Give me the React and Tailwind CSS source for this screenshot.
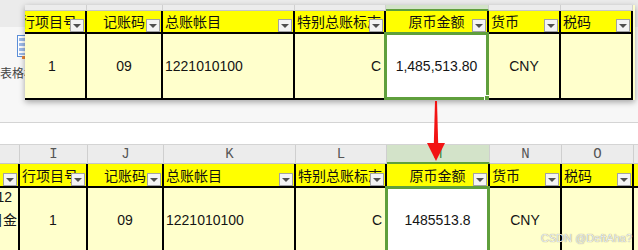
import React from "react";

const COLS = [
  { key: "H", w: "w-[20px]", letter: "", head: "", ha: "left", data: null, da: "left" },
  { key: "I", w: "w-[68px]", letter: "I", head: "行项目号", ha: "left", data: "1", da: "center" },
  { key: "J", w: "w-[76px]", letter: "J", head: "记账码", ha: "center", data: "09", da: "center" },
  { key: "K", w: "w-[132px]", letter: "K", head: "总账帐目", ha: "left", data: "1221010100", da: "left" },
  { key: "L", w: "w-[91px]", letter: "L", head: "特别总账标志", ha: "left", data: "C", da: "right" },
  { key: "M", w: "w-[103px]", letter: "M", head: "原币金额", ha: "center", data: "AMOUNT", da: "center", sel: true },
  { key: "N", w: "w-[72px]", letter: "N", head: "货币", ha: "left", data: "CNY", da: "center" },
  { key: "O", w: "w-[72px]", letter: "O", head: "税码", ha: "left", data: "", da: "left" },
  { key: "P", w: "w-[80px]", letter: "P", head: "", ha: "left", data: "", da: "left" },
];

const HALIGN = {
  left: "justify-start pl-[2px]",
  center: "justify-center",
  right: "justify-end pr-[3px]",
};

function Dropdown({ className = "right-[1px]" }) {
  return (
    <div
      className={`absolute bottom-0 ${className} w-[14px] h-[13px] bg-[#f4f4f4] border border-[#a3a3a3] flex items-center justify-center`}
    >
      <div className="mt-[1px] w-0 h-0 border-l-[4px] border-r-[4px] border-t-[4px] border-l-transparent border-r-transparent border-t-[#505050]" />
    </div>
  );
}

function Sheet({ top, amount }) {
  const cols = top ? COLS.filter((c) => c.key !== "H" && c.key !== "P") : COLS;
  const letterRow = (
    <div className="flex">
      {cols.map((c) => (
        <div
          key={c.key}
          className={`${c.w} shrink-0 h-[19px] border-r border-r-[#cfcfcf] flex items-center justify-center text-[14px] leading-none font-['Liberation_Mono',monospace] ${
            c.sel
              ? "bg-[#d3e3c9] border-b-2 border-b-[#5f9f3c] text-[#2f7d32]"
              : "bg-[#ececec] border-b border-b-[#c6c6c6] text-[#555]"
          }`}
        >
          {c.letter}
        </div>
      ))}
    </div>
  );

  return (
    <div className={top ? "ml-[-6px]" : ""}>
      {top ? (
        <div className="h-[6px] overflow-hidden">
          <div className="-mt-[13px]">{letterRow}</div>
        </div>
      ) : (
        letterRow
      )}

      {/* Yellow header row */}
      <div className="flex">
        {cols.map((c) => (
          <div
            key={c.key}
            className={`${c.w} shrink-0 relative ${top ? "h-[23px]" : "h-[24px]"} bg-[#ffff00] border-r-2 border-b-2 border-black flex items-center overflow-hidden whitespace-nowrap text-[14px] text-[#111] font-['Noto_Sans_CJK_SC',sans-serif] ${HALIGN[c.ha]}`}
          >
            <span>{c.head}</span>
            {c.key === "P" ? null : <Dropdown />}
          </div>
        ))}
      </div>

      {/* Data row */}
      <div className="flex">
        {cols.map((c) => (
          <div
            key={c.key}
            className={`${c.w} shrink-0 relative h-[66px] border-r-2 border-b-2 border-black flex items-center whitespace-nowrap text-[14px] text-[#141414] font-['Liberation_Sans','Noto_Sans_CJK_SC',sans-serif] ${
              c.sel ? "bg-white" : "bg-[#ffffcc]"
            } ${HALIGN[c.da]} ${c.key === "H" ? "overflow-hidden" : ""}`}
          >
            {c.key === "H" ? (
              <div className="self-start -mt-[2px] w-full flex flex-col items-end leading-[23px]">
                <span className="mr-[6px]">12</span>
                <span className="mr-[1px]">目金</span>
              </div>
            ) : c.data === "AMOUNT" ? (
              <span>{amount}</span>
            ) : (
              <span>{c.data}</span>
            )}
            {c.sel && (
              <div className="absolute -top-[2px] -left-[2px] -right-[2px] -bottom-[2px] border-[3px] border-[#5f9f3c] pointer-events-none">
                {top && (
                  <div className="absolute -right-[4px] -bottom-[4px] w-[6px] h-[6px] bg-[#5f9f3c] border border-white" />
                )}
              </div>
            )}
          </div>
        ))}
      </div>
    </div>
  );
}

function TableIcon() {
  return (
    <svg width="20" height="24" viewBox="0 0 20 24">
      <rect x="0.5" y="0.5" width="15" height="21" fill="#ffffff" stroke="#5b8ed8" />
      <rect x="2" y="3" width="12" height="3" fill="#9dbbe8" />
      <rect x="2" y="8" width="12" height="3" fill="#9dbbe8" />
      <rect x="2" y="13" width="12" height="3" fill="#9dbbe8" />
      <rect x="2" y="18" width="12" height="2" fill="#9dbbe8" />
      <rect x="5" y="21" width="4" height="3" fill="#e8893a" />
    </svg>
  );
}

export default function App() {
  return (
    <div className="relative w-[638px] h-[250px] overflow-hidden bg-[#f6f6f6] font-['Noto_Sans_CJK_SC',sans-serif]">
      {/* ribbon */}
      <div className="h-[27px] bg-[#ebebeb]" />
      <div className="h-[95px] bg-[#f7f7f7] flex flex-col">
        <div className="pl-[17px] pt-[8px] leading-none">
          <TableIcon />
        </div>
        <div className="mt-[7px] text-[12px] leading-[14px] text-[#444] whitespace-nowrap">
          表格格式
        </div>
      </div>
      <div className="h-px bg-[#d4d4d4]" />
      <div className="h-[21px] bg-white" />
      <div className="h-px bg-[#d4d4d4]" />

      {/* bottom sheet */}
      <Sheet amount="1485513.8" />

      {/* floating top snippet */}
      <div className="absolute left-[25px] top-[5px] w-[610px] h-[95px] overflow-hidden bg-[#ffffcc] shadow-[0_2px_6px_rgba(0,0,0,0.35)]">
        <Sheet top amount="1,485,513.80" />
      </div>

      {/* red arrow */}
      <svg
        className="absolute left-[426px] top-[100px]"
        width="20"
        height="62"
        viewBox="0 0 20 62"
      >
        <polygon points="9,1 11,1 12.2,44 7.8,44" fill="#f21414" />
        <polygon points="1,43 19,43 10,61" fill="#f21414" />
      </svg>

      {/* watermark */}
      <div className="absolute left-[541px] top-[231px] text-[11px] leading-[14px] whitespace-nowrap text-[#f0f0f0] font-['Liberation_Sans',sans-serif] [text-shadow:0_0_1px_rgba(0,0,0,0.55)]">
        CSDN @DeftAha?
      </div>
    </div>
  );
}
